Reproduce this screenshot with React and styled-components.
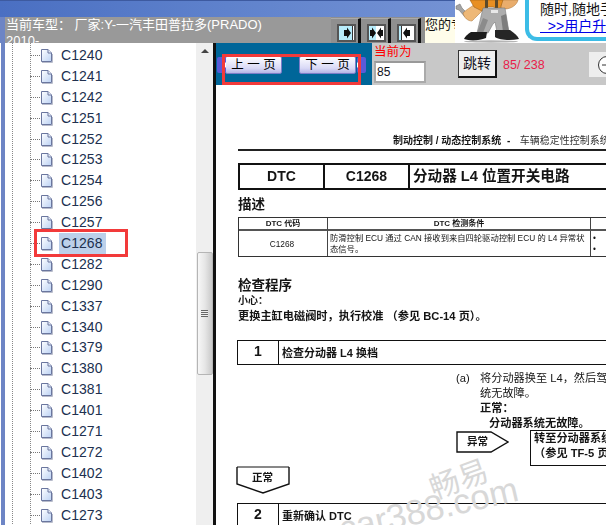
import React from "react";
import styled, { createGlobalStyle } from "styled-components";

const GlobalStyle = createGlobalStyle`
  html, body { margin: 0; padding: 0; background: #fff; }
  body { font-family: "Liberation Sans", "Noto Sans CJK SC", sans-serif; }
`;

const CJK = `"Liberation Sans", "Noto Sans CJK SC", sans-serif`;

const Shell = styled.div`
  width: 606px;
  height: 525px;
  overflow: hidden;
  display: flex;
  flex-direction: column;
  position: relative;
`;

/* top strip */
const TopBar = styled.div`
  height: 43px;
  flex: none;
  display: flex;
  background: #fff;
`;
const TopLeft = styled.div`
  width: 455px;
  flex: none;
  display: flex;
  flex-direction: column;
`;
const TitleStripe = styled.div`
  height: 16px;
  border-top: 1px solid #3d5aa0;
  background: linear-gradient(90deg, #4a6fc2 0%, #5f82cc 50%, #7492d4 100%);
`;
const InfoRow = styled.div`
  height: 26px;
  display: flex;
  background: #6d85c5;
  padding-left: 5px;
`;
const CarInfo = styled.div`
  width: 326px;
  flex: none;
  box-sizing: border-box;
  padding: 0 50px 0 1px;
  background: #999;
  color: #fff;
  font: 13px/16px ${CJK};
  overflow: hidden;
`;
const PlayerTools = styled.div`
  width: 94px;
  flex: none;
  display: flex;
  background: #8f8f8f;
`;
const ToolCell = styled.div`
  width: 30px;
  height: 25px;
  margin-top: 1px;
  flex: none;
  box-sizing: border-box;
  padding: 5px 0 0 6px;
  border-right: 3px solid #111;
  border-top: 1px solid #aaa;
`;
const ToolFace = styled.div`
  width: 19px;
  height: 18px;
  box-sizing: border-box;
  border: 2px solid #555;
  background: ${(p) => p.$bg};
  svg { display: block; }
`;
const Greeting = styled.div`
  flex: 1;
  background: #fffdea;
  color: #111;
  font: 13px/16px ${CJK};
  overflow: hidden;
  white-space: nowrap;
`;
const Mascot = styled.svg`
  width: 70px;
  height: 43px;
  flex: none;
  filter: blur(0.4px);
`;
const Bubble = styled.div`
  flex: 1;
  min-width: 0;
  margin-top: -8px;
  margin-bottom: 2px;
  padding: 4.5px 0 0 11px;
  border: 4px solid #3cbce6;
  border-right: none;
  border-radius: 0 0 0 12px;
  background: #fff;
  white-space: nowrap;
  overflow: hidden;
  font: 14px/17px ${CJK};
  color: #111;
`;
const UpgradeLink = styled.div`
  color: #0000e6;
  text-decoration: underline;
`;

/* main area */
const Body = styled.div`
  flex: 1;
  min-height: 0;
  display: flex;
`;
const LeftEdge = styled.div`
  width: 4px;
  flex: none;
  border-left: 1px solid #fff;
  background: #6d85c5;
`;
const Tree = styled.div`
  width: 191px;
  flex: none;
  padding-top: 2px;
  box-sizing: border-box;
  background-color: #fff;
  background-image:
    repeating-linear-gradient(#888 0 1px, transparent 1px 2px),
    repeating-linear-gradient(#888 0 1px, transparent 1px 2px);
  background-size: 1px 100%;
  background-position: 7px 0, 25px 0;
  background-repeat: no-repeat;
  overflow: hidden;
`;
const TreeRow = styled.div`
  height: 20.9px;
  display: flex;
  align-items: center;
  padding-left: 25px;
  position: relative;
`;
const Connector = styled.span`
  width: 10px;
  flex: none;
  border-top: 1px dotted #777;
`;
const PageIcon = styled.svg`
  width: 13px;
  height: 15px;
  flex: none;
`;
const NodeLabel = styled.span`
  margin-left: 6px;
  padding: 0 3px 0 2px;
  height: 21px;
  line-height: 21px;
  font-size: 14px;
  letter-spacing: 0.05px;
  color: #20304f;
  background: ${(p) => (p.$selected ? "#bcd0ea" : "transparent")};
`;
const TreeMark = styled.div`
  position: absolute;
  left: 29px;
  top: -4px;
  width: 94px;
  height: 28px;
  box-sizing: border-box;
  border: 3px solid #f23a3a;
`;
const ScrollTrack = styled.div`
  width: 17px;
  flex: none;
  background: #efefef;
  display: flex;
  flex-direction: column;
  align-items: center;
  padding-top: 6px;
  box-sizing: border-box;
`;
const ScrollArrow = styled.div`
  width: 0;
  height: 0;
  border: 4px solid transparent;
  border-top: 0;
  border-bottom: 4px solid #444;
`;
const ScrollThumb = styled.div`
  margin-top: 199px;
  width: 16px;
  height: 123px;
  flex: none;
  box-sizing: border-box;
  border: 1px solid #b5b5b5;
  border-radius: 2px;
  background: linear-gradient(90deg, #f7f7f7, #e6e6e6 50%, #c9c9c9);
  display: flex;
  align-items: center;
  justify-content: center;
`;
const Grip = styled.div`
  width: 7px;
  height: 7px;
  background: repeating-linear-gradient(#666 0 1px, #eee 1px 2px);
`;
const Divider = styled.div`
  width: 3px;
  flex: none;
  background: #111;
`;
const Viewer = styled.div`
  flex: 1;
  min-width: 0;
  display: flex;
  flex-direction: column;
  background: #fff;
  position: relative;
  overflow: hidden;
`;

/* viewer toolbar */
const ViewerBar = styled.div`
  height: 42px;
  flex: none;
  display: flex;
  position: relative;
`;
const PagerArea = styled.div`
  width: 156px;
  flex: none;
  background: #006699;
  display: flex;
  gap: 17px;
  padding: 13px 0 0 1px;
  box-sizing: border-box;
`;
const PagerButton = styled.div`
  width: 57px;
  height: 18px;
  box-sizing: border-box;
  border: 1px solid #7c7cc8;
  border-radius: 2px;
  background: linear-gradient(#fdfdff, #d9d9f6 70%, #b5b5e6);
  color: #000;
  font: 12.5px/16px ${CJK};
  text-align: center;
  white-space: pre;
  position: relative;
  margin-left: ${(p) => (p.$first ? "8px" : "0")};
  &::before {
    content: "";
    position: absolute;
    top: 0;
    ${(p) => (p.$first ? "left: -9px" : "right: -11px")};
    width: 9px;
    height: 16px;
    border-radius: 2px;
    background: radial-gradient(circle at ${(p) => (p.$first ? "8px" : "1px")} 8px, #fff 0 2px, #5a5ad8 3px);
  }
`;
const PagerMark = styled.div`
  position: absolute;
  left: 6px;
  top: 11px;
  width: 139px;
  height: 31px;
  box-sizing: border-box;
  border: 3px solid #f23a3a;
`;
const JumpArea = styled.div`
  flex: 1;
  background: #c8c8c8;
  display: flex;
  align-items: flex-start;
`;
const PageField = styled.div`
  width: 52px;
  margin-left: 2px;
  flex: none;
`;
const FieldCaption = styled.div`
  color: #f00;
  font: 12.5px/18px ${CJK};
`;
const PageInput = styled.div`
  height: 22px;
  box-sizing: border-box;
  border: 2px solid #aaa;
  border-top-color: #999;
  background: #fff;
  color: #112;
  font: 12px/18px ${CJK};
  padding-left: 1px;
`;
const JumpButton = styled.div`
  margin: 7px 0 0 32px;
  width: 39px;
  height: 28px;
  box-sizing: border-box;
  border: 1px solid #333;
  border-right: 2px solid #111;
  border-bottom: 2px solid #111;
  background: #efefef;
  color: #112;
  font: 14px/24px ${CJK};
  text-align: center;
`;
const PageCount = styled.div`
  margin: 13px 0 0 6px;
  width: 86px;
  flex: none;
  color: #e81c4a;
  font: 12.5px/18px ${CJK};
`;
const ZoomOut = styled.div`
  flex: 1;
  height: 25px;
  margin-top: 9px;
  background: #eee;
  overflow: hidden;
  padding: 3px 0 0 8px;
  box-sizing: border-box;
`;

/* scanned page */
const ScanPage = styled.div`
  flex: 1;
  min-height: 0;
  padding-left: 22px;
  overflow: hidden;
  color: #151515;
  font-family: ${CJK};
  filter: blur(0.35px);
`;
const Column = styled.div`
  width: 420px;
`;
const RunningHead = styled.div`
  margin-top: 50px;
  height: 14px;
  padding-left: 155px;
  border-bottom: 2px solid #222;
  font: bold 10px/12px ${CJK};
  white-space: nowrap;
`;
const HeadMuted = styled.span`
  font-weight: normal;
  color: #333;
  margin-left: 4px;
`;
const DtcTitle = styled.div`
  margin-top: 12px;
  height: 27px;
  display: grid;
  grid-template-columns: 83px 85px 1fr;
  box-sizing: border-box;
  border: 2px solid #111;
`;
const DtcCell = styled.div`
  font: bold ${(p) => p.$size || 14}px/23px ${CJK};
  text-align: ${(p) => (p.$left ? "left" : "center")};
  padding-left: ${(p) => (p.$left ? "3px" : "0")};
  border-left: ${(p) => (p.$divided ? "2px solid #111" : "none")};
  white-space: nowrap;
`;
const SectionTitle = styled.div`
  margin-top: ${(p) => p.$top}px;
  height: 16px;
  font: bold 13.5px/16px ${CJK};
`;
const DescTable = styled.div`
  margin-top: 4px;
  height: 40px;
  box-sizing: border-box;
  border: 1px solid #333;
  display: grid;
  grid-template-columns: 88px 263px 1fr;
  grid-template-rows: 13px 1fr;
  font-size: 8px;
`;
const DescHead = styled.div`
  font-weight: bold;
  line-height: 12px;
  text-align: center;
  border-bottom: 2px solid #555;
  border-left: ${(p) => (p.$divided ? "1px solid #444" : "none")};
`;
const DescCell = styled.div`
  font-size: 8.3px;
  line-height: 11px;
  padding: 2px 4px 0 2px;
  border-left: ${(p) => (p.$divided ? "1px solid #444" : "none")};
  text-align: ${(p) => (p.$center ? "center" : "left")};
  white-space: pre-wrap;
  ${(p) => p.$center && "line-height: 22px;"}
`;
const SmallNote = styled.div`
  margin-top: ${(p) => p.$top}px;
  font: bold ${(p) => p.$size}px/${(p) => p.$line}px ${CJK};
  white-space: nowrap;
`;
const StepBox = styled.div`
  margin: ${(p) => p.$top}px 0 0 -1px;
  height: 25px;
  display: grid;
  grid-template-columns: 41px 1fr;
  box-sizing: border-box;
  border: 1.5px solid #111;
`;
const StepNumber = styled.div`
  font: bold 14px/20px ${CJK};
  text-align: center;
  border-right: 1.5px solid #111;
`;
const StepText = styled.div`
  font: bold 11px/24px ${CJK};
  padding-left: 3px;
  white-space: nowrap;
`;
const ProcedureBlock = styled.div`
  margin: 6px 0 0 218px;
  width: 210px;
  height: 60px;
`;
const ProcLine = styled.div`
  font: ${(p) => (p.$bold ? "bold" : "normal")} 11.2px/15px ${CJK};
  padding-left: ${(p) => p.$indent || 0}px;
  white-space: nowrap;
`;
const ProcMarker = styled.span`
  display: inline-block;
  width: 24px;
`;
const BranchRow = styled.div`
  margin: 0 0 0 218px;
  display: flex;
  align-items: flex-start;
  gap: 21px;
  height: 35px;
  width: 300px;
`;
const Tag = styled.div`
  position: relative;
  width: ${(p) => p.$w}px;
  height: ${(p) => p.$h}px;
  flex: none;
  font: bold 10.5px/${(p) => p.$line}px ${CJK};
  padding-left: ${(p) => p.$pad}px;
  box-sizing: border-box;
  svg {
    position: absolute;
    inset: 0;
  }
`;
const DetourBox = styled.div`
  width: 200px;
  height: 36px;
  box-sizing: border-box;
  border: 1.5px solid #111;
  padding-left: 3px;
  font: bold 11.2px/15px ${CJK};
  white-space: nowrap;
  margin-top: -1px;
`;
const DownTagWrap = styled.div`
  margin-left: -2px;
`;
const Watermark = styled.div`
  position: absolute;
  color: #d8d8d8;
  font-family: ${CJK};
  white-space: nowrap;
  left: ${(p) => p.$x}px;
  top: ${(p) => p.$y}px;
  font-size: ${(p) => p.$size}px;
  transform: rotate(${(p) => p.$rot}deg);
`;

const CODES = [
  "C1240", "C1241", "C1242", "C1251", "C1252", "C1253", "C1254", "C1256",
  "C1257", "C1268", "C1282", "C1290", "C1337", "C1340", "C1379", "C1380",
  "C1381", "C1401", "C1271", "C1272", "C1402", "C1403", "C1273",
];

function DocIcon() {
  return (
    <PageIcon viewBox="0 0 13 15">
      <defs>
        <linearGradient id="leaf" x1="0" y1="0" x2="1" y2="1">
          <stop offset="0" stopColor="#ffffff" />
          <stop offset="1" stopColor="#bcd2f4" />
        </linearGradient>
      </defs>
      <path d="M1.5 1.5H8L11.5 5V13.5H1.5Z" fill="url(#leaf)" stroke="#6a769e" />
      <path d="M8 1.5V5H11.5" fill="#e8eefa" stroke="#6a769e" />
      <path d="M2 14.5H12.5V6" fill="none" stroke="#b8bccb" />
    </PageIcon>
  );
}

function StepForward() {
  return (
    <svg width="15" height="14" viewBox="0 0 15 14">
      <rect x="13" width="1" height="14" fill="#333" />
      <rect x="14" width="1" height="14" fill="#fff" />
      <path d="M5 4H8V1.5L12 7L8 12.5V10H5Z" fill="#111" />
    </svg>
  );
}

function StepBoth() {
  return (
    <svg width="15" height="14" viewBox="0 0 15 14">
      <path d="M1 4H3V1.5L7 7L3 12.5V10H1Z" fill="#111" />
      <path d="M14 4H12V1.5L8 7L12 12.5V10H14Z" fill="#111" />
    </svg>
  );
}

function StepBack() {
  return (
    <svg width="15" height="14" viewBox="0 0 15 14">
      <rect width="2" height="14" fill="#b8ecfb" />
      <rect x="2" width="1" height="14" fill="#333" />
      <path d="M11 4H8V1.5L4 7L8 12.5V10H11Z" fill="#111" />
    </svg>
  );
}

function MascotDrawing() {
  return (
    <Mascot viewBox="0 0 70 43">
      <rect width="70" height="43" fill="#fff" />
      {/* wrench */}
      <path d="M1 6L5 4L7 8L13 14L10 17L4 10L1 9Z" fill="#a4a4a4" stroke="#666" strokeWidth="0.5" />
      {/* arms */}
      <path d="M8 13C12 9 15 8 20 4L28 10C24 14 20 18 17 21C13 21 9 18 8 13Z" fill="#eeb877" stroke="#a8753b" strokeWidth="0.5" />
      <path d="M46 0H63C62 5 56 9 50 9L46 8Z" fill="#e9ad6c" stroke="#a8753b" strokeWidth="0.5" />
      {/* shirt */}
      <path d="M15 0H48L45 9L38 7H30L27 11L19 7Z" fill="#e88f22" stroke="#8f5510" strokeWidth="0.5" />
      <rect x="30" y="0" width="3" height="8" fill="#5c4a2a" />
      <rect x="40" y="0" width="3" height="8" fill="#5c4a2a" />
      {/* overalls */}
      <path d="M28 8H50L54 32H42L40 22L38 24L33 33H22Z" fill="#adadad" stroke="#6e6e6e" strokeWidth="0.5" />
      <rect x="36" y="10" width="7" height="3" fill="#e8e8e8" />
      <path d="M28 18L22 33H28L33 20Z" fill="#8b8b8b" />
      <path d="M46 16L48 32H54L51 14Z" fill="#7d7d7d" />
      {/* boots */}
      <path d="M16 32H32L31 38C24 41 14 41 9 39C10 36 13 34 16 32Z" fill="#1c1c1c" />
      <path d="M40 30H55C59 33 63 36 64 39C55 41 44 40 40 37Z" fill="#262626" />
      <ellipse cx="36" cy="41.5" rx="27" ry="1.2" fill="#b5b5b5" />
    </Mascot>
  );
}

export default function App() {
  return (
    <>
      <GlobalStyle />
      <Shell>
        <TopBar>
          <TopLeft>
            <TitleStripe />
            <InfoRow>
              <CarInfo>当前车型： 厂家:Y-一汽丰田普拉多(PRADO) 2010-</CarInfo>
              <PlayerTools>
                <ToolCell><ToolFace $bg="#b8ecfb"><StepForward /></ToolFace></ToolCell>
                <ToolCell><ToolFace $bg="linear-gradient(90deg,#b8ecfb 50%,#fff 50%)"><StepBoth /></ToolFace></ToolCell>
                <ToolCell><ToolFace $bg="#fff"><StepBack /></ToolFace></ToolCell>
              </PlayerTools>
              <Greeting>您的专</Greeting>
            </InfoRow>
          </TopLeft>
          <MascotDrawing />
          <Bubble>
            随时,随地手
            <UpgradeLink>&nbsp;&nbsp;&gt;&gt;用户升级</UpgradeLink>
          </Bubble>
        </TopBar>
        <Body>
          <LeftEdge />
          <Tree>
            {CODES.map((code) => (
              <TreeRow key={code}>
                <Connector />
                <DocIcon />
                <NodeLabel $selected={code === "C1268"}>{code}</NodeLabel>
                {code === "C1268" && <TreeMark />}
              </TreeRow>
            ))}
          </Tree>
          <ScrollTrack>
            <ScrollArrow />
            <ScrollThumb><Grip /></ScrollThumb>
          </ScrollTrack>
          <Divider />
          <Viewer>
            <ViewerBar>
              <PagerArea>
                <PagerButton $first>上 一 页</PagerButton>
                <PagerButton>下 一 页</PagerButton>
              </PagerArea>
              <PagerMark />
              <JumpArea>
                <PageField>
                  <FieldCaption>当前为</FieldCaption>
                  <PageInput>85</PageInput>
                </PageField>
                <JumpButton>跳转</JumpButton>
                <PageCount>85/ 238</PageCount>
                <ZoomOut>
                  <svg width="20" height="20" viewBox="0 0 20 20">
                    <circle cx="10" cy="10" r="8.5" fill="#fff" stroke="#333" />
                    <path d="M5 10H15" stroke="#333" />
                  </svg>
                </ZoomOut>
              </JumpArea>
            </ViewerBar>
            <ScanPage>
              <Column>
                <RunningHead>
                  制动控制 / 动态控制系统 &nbsp;-&nbsp; <HeadMuted>车辆稳定性控制系统</HeadMuted>
                </RunningHead>
                <DtcTitle>
                  <DtcCell>DTC</DtcCell>
                  <DtcCell $divided>C1268</DtcCell>
                  <DtcCell $divided $left $size={14.6}>分动器 L4 位置开关电路</DtcCell>
                </DtcTitle>
                <SectionTitle $top={7}>描述</SectionTitle>
                <DescTable>
                  <DescHead>DTC 代码</DescHead>
                  <DescHead $divided>DTC 检测条件</DescHead>
                  <DescHead $divided />
                  <DescCell $center>C1268</DescCell>
                  <DescCell $divided>防滑控制 ECU 通过 CAN 接收到来自四轮驱动控制 ECU 的 L4 异常状态信号。</DescCell>
                  <DescCell $divided>•{"\n"}•</DescCell>
                </DescTable>
                <SectionTitle $top={21}>检查程序</SectionTitle>
                <SmallNote $top={1} $size={10} $line={12}>小心：</SmallNote>
                <SmallNote $top={2} $size={11.2} $line={14}>更换主缸电磁阀时，执行校准 （参见 BC-14 页）。</SmallNote>
                <StepBox $top={17}>
                  <StepNumber>1</StepNumber>
                  <StepText>检查分动器 L4 换档</StepText>
                </StepBox>
                <ProcedureBlock>
                  <ProcLine><ProcMarker>(a)</ProcMarker>将分动器换至 L4，然后驾驶</ProcLine>
                  <ProcLine $indent={24}>统无故障。</ProcLine>
                  <ProcLine $bold $indent={24}>正常：</ProcLine>
                  <ProcLine $bold $indent={33}>分动器系统无故障。</ProcLine>
                </ProcedureBlock>
                <BranchRow>
                  <Tag $w={53} $h={22} $line={21} $pad={11}>
                    <svg width="53" height="22" viewBox="0 0 53 22">
                      <path d="M1 1H35L52 11L35 21H1Z" fill="none" stroke="#111" strokeWidth="1.4" />
                    </svg>
                    异常
                  </Tag>
                  <DetourBox>
                    转至分动器系统检查<br />（参见 TF-5 页）
                  </DetourBox>
                </BranchRow>
                <DownTagWrap>
                  <Tag $w={54} $h={28} $line={22} $pad={16}>
                    <svg width="54" height="28" viewBox="0 0 54 28">
                      <path d="M1 1V18L27 27L53 18V1" fill="none" stroke="#111" strokeWidth="1.4" />
                      <path d="M1 1H53" stroke="#111" strokeWidth="1" />
                    </svg>
                    正常
                  </Tag>
                </DownTagWrap>
                <StepBox $top={9}>
                  <StepNumber>2</StepNumber>
                  <StepText>重新确认 DTC</StepText>
                </StepBox>
              </Column>
            </ScanPage>
            <Watermark $x={212} $y={412} $size={30} $rot={-20}>畅易</Watermark>
            <Watermark $x={121} $y={446} $size={35} $rot={-13}>car388.com</Watermark>
          </Viewer>
        </Body>
      </Shell>
    </>
  );
}
